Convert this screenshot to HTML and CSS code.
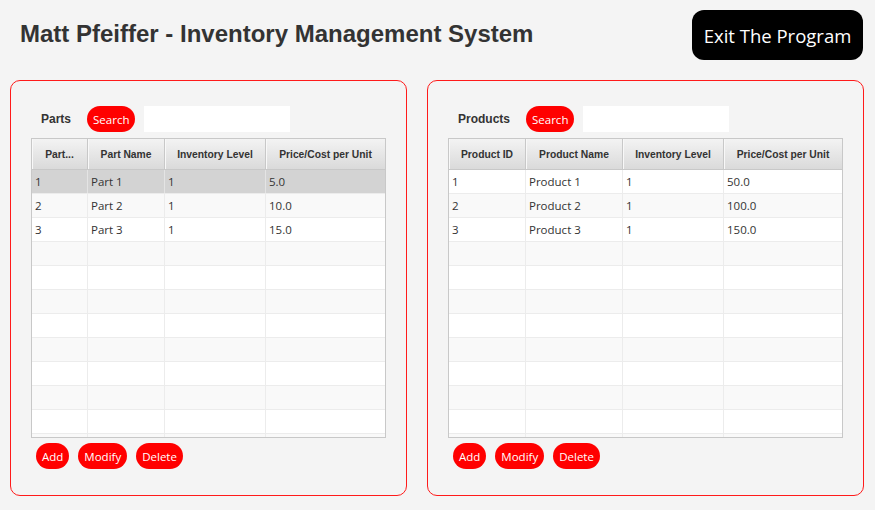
FILE: index.html
```html
<!DOCTYPE html>
<html lang="en">
<head>
<meta charset="utf-8">
<title>Inventory Management System</title>
<link rel="stylesheet" href="styles.css">
</head>
<body>
<div class="header">
  <h1 class="title">Matt Pfeiffer - Inventory Management System</h1>
  <button class="exit-btn">Exit The Program</button>
</div>
<div class="panels">
  <section class="panel panel-parts">
    <div class="toolbar">
      <span class="panel-label">Parts</span>
      <button class="pill">Search</button>
      <input class="search-field" type="text">
    </div>
    <div class="table parts-table">
      <div class="row head">
        <div class="cell">Part...</div>
        <div class="cell">Part Name</div>
        <div class="cell">Inventory Level</div>
        <div class="cell">Price/Cost per Unit</div>
      </div>
      <div class="row selected"><div class="cell">1</div><div class="cell">Part 1</div><div class="cell">1</div><div class="cell">5.0</div></div>
      <div class="row odd"><div class="cell">2</div><div class="cell">Part 2</div><div class="cell">1</div><div class="cell">10.0</div></div>
      <div class="row"><div class="cell">3</div><div class="cell">Part 3</div><div class="cell">1</div><div class="cell">15.0</div></div>
      <div class="row odd"><div class="cell"></div><div class="cell"></div><div class="cell"></div><div class="cell"></div></div>
      <div class="row"><div class="cell"></div><div class="cell"></div><div class="cell"></div><div class="cell"></div></div>
      <div class="row odd"><div class="cell"></div><div class="cell"></div><div class="cell"></div><div class="cell"></div></div>
      <div class="row"><div class="cell"></div><div class="cell"></div><div class="cell"></div><div class="cell"></div></div>
      <div class="row odd"><div class="cell"></div><div class="cell"></div><div class="cell"></div><div class="cell"></div></div>
      <div class="row"><div class="cell"></div><div class="cell"></div><div class="cell"></div><div class="cell"></div></div>
      <div class="row odd"><div class="cell"></div><div class="cell"></div><div class="cell"></div><div class="cell"></div></div>
      <div class="row"><div class="cell"></div><div class="cell"></div><div class="cell"></div><div class="cell"></div></div>
      <div class="row odd"><div class="cell"></div><div class="cell"></div><div class="cell"></div><div class="cell"></div></div>
    </div>
    <div class="actions">
      <button class="pill">Add</button>
      <button class="pill">Modify</button>
      <button class="pill">Delete</button>
    </div>
  </section>
  <section class="panel panel-products">
    <div class="toolbar">
      <span class="panel-label">Products</span>
      <button class="pill">Search</button>
      <input class="search-field" type="text">
    </div>
    <div class="table products-table">
      <div class="row head">
        <div class="cell">Product ID</div>
        <div class="cell">Product Name</div>
        <div class="cell">Inventory Level</div>
        <div class="cell">Price/Cost per Unit</div>
      </div>
      <div class="row"><div class="cell">1</div><div class="cell">Product 1</div><div class="cell">1</div><div class="cell">50.0</div></div>
      <div class="row odd"><div class="cell">2</div><div class="cell">Product 2</div><div class="cell">1</div><div class="cell">100.0</div></div>
      <div class="row"><div class="cell">3</div><div class="cell">Product 3</div><div class="cell">1</div><div class="cell">150.0</div></div>
      <div class="row odd"><div class="cell"></div><div class="cell"></div><div class="cell"></div><div class="cell"></div></div>
      <div class="row"><div class="cell"></div><div class="cell"></div><div class="cell"></div><div class="cell"></div></div>
      <div class="row odd"><div class="cell"></div><div class="cell"></div><div class="cell"></div><div class="cell"></div></div>
      <div class="row"><div class="cell"></div><div class="cell"></div><div class="cell"></div><div class="cell"></div></div>
      <div class="row odd"><div class="cell"></div><div class="cell"></div><div class="cell"></div><div class="cell"></div></div>
      <div class="row"><div class="cell"></div><div class="cell"></div><div class="cell"></div><div class="cell"></div></div>
      <div class="row odd"><div class="cell"></div><div class="cell"></div><div class="cell"></div><div class="cell"></div></div>
      <div class="row"><div class="cell"></div><div class="cell"></div><div class="cell"></div><div class="cell"></div></div>
      <div class="row odd"><div class="cell"></div><div class="cell"></div><div class="cell"></div><div class="cell"></div></div>
    </div>
    <div class="actions">
      <button class="pill">Add</button>
      <button class="pill">Modify</button>
      <button class="pill">Delete</button>
    </div>
  </section>
</div>
</body>
</html>
```
FILE: styles.css
```css
* { box-sizing: border-box; }
html, body {
  margin: 0;
  padding: 0;
  background: #f4f4f4;
  width: 875px;
  height: 510px;
  overflow: hidden;
  font-family: "Open Sans", "Liberation Sans", sans-serif;
  color: #333;
}
.header {
  display: flex;
  justify-content: space-between;
  align-items: flex-start;
  padding: 10px 12px 0 20px;
  height: 80px;
}
.title {
  margin: 10px 0 0 0;
  font-family: "Liberation Sans", Arial, sans-serif;
  font-weight: bold;
  font-size: 24px;
  line-height: 28px;
  color: #333;
}
.exit-btn {
  width: 171px;
  height: 50px;
  background: #000;
  color: #fff;
  border: none;
  border-radius: 12px;
  font-family: "Open Sans", sans-serif;
  font-size: 18.5px;
  padding: 0;
}
.panels {
  display: flex;
  gap: 20px;
  padding-left: 10px;
}
.panel {
  height: 416px;
  border: 1px solid #ff1a1a;
  border-radius: 10px;
  padding: 25px 20px 0 20px;
  display: flex;
  flex-direction: column;
}
.panel-parts { width: 397px; }
.panel-products { width: 437px; }
.toolbar {
  display: flex;
  align-items: center;
  height: 26px;
}
.panel-label {
  font-family: "Liberation Sans", Arial, sans-serif;
  font-weight: bold;
  font-size: 12px;
  margin-left: 10px;
  margin-right: 16px;
  color: #333;
}
.pill {
  height: 26px;
  background: #ff0000;
  color: #fff;
  border: none;
  border-radius: 13px;
  font-family: "Open Sans", sans-serif;
  font-size: 11.5px;
  padding: 0 6px;
}
.search-field {
  margin-left: 9px;
  width: 146px;
  height: 26px;
  border: none;
  background: #fff;
  padding: 0 6px;
}
.table {
  margin-top: 6px;
  height: 300px;
  border: 1px solid #c8c8c8;
  background: #fff;
  overflow: hidden;
}
.parts-table { width: 355px; }
.products-table { width: 395px; }
.parts-table .row { grid-template-columns: 56px 77px 101px 1fr; }
.products-table .row { grid-template-columns: 77px 97px 101px 1fr; }
.row {
  display: grid;
  height: 24px;
  border-bottom: 1px solid #ececec;
  background: #fff;
}
.row.odd { background: #f9f9f9; }
.row.selected { background: #d3d3d3; }
.cell {
  font-size: 11.5px;
  line-height: 23px;
  padding-left: 3px;
  border-right: 1px solid #ececec;
  white-space: nowrap;
  overflow: hidden;
  color: #333;
}
.row.selected .cell { border-right-color: #e4e4e4; }
.cell:last-child { border-right: none; }
.row.head {
  height: 31px;
  border-bottom: 1px solid #c8c8c8;
  background: linear-gradient(#f3f3f3, #dadada);
}
.row.head .cell {
  font-family: "Liberation Sans", Arial, sans-serif;
  font-weight: bold;
  font-size: 10.3px;
  line-height: 31px;
  text-align: center;
  padding: 0;
  border-right: 1px solid #c8c8c8;
  box-shadow: inset 1px 0 0 #f8f8f8;
}
.row.head .cell:last-child { border-right: none; }
.actions {
  display: flex;
  gap: 9px;
  margin-top: 5px;
  padding-left: 5px;
}
```
